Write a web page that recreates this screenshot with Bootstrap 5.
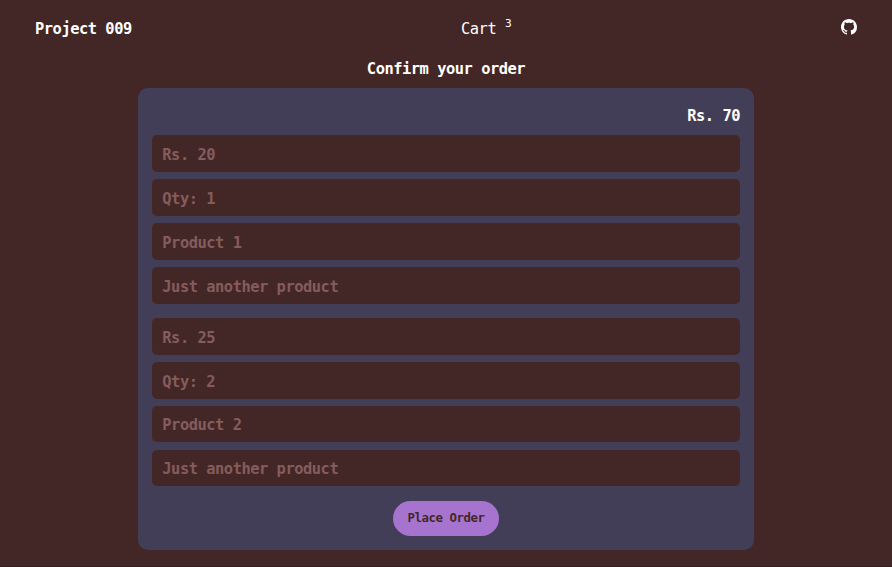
<!DOCTYPE html>
<html lang="en">
<head>
<meta charset="utf-8">
<meta name="viewport" content="width=device-width, initial-scale=1">
<title>Confirm your order</title>
<link rel="stylesheet" href="https://cdn.jsdelivr.net/npm/bootstrap@5.3.0/dist/css/bootstrap.min.css">
<style>
html { font-size: 14px; }
body { background: #432727; color: #fff; font-family: "DejaVu Sans Mono", monospace; font-size: 15.4px; letter-spacing: -.472px; line-height: 18px; height: 567px; overflow: hidden; border-bottom: 1px solid #381d1e; }
.topbar { padding: 19px 35px 0; height: 60px; }
.topbar > div { padding-top: 1px; }
.cart-count { font-size: 11.2px; letter-spacing: 0; top: -7px; line-height: 0; }
.page-title { height: 28px; }
.order-panel { width: 616px; height: 462px; background: #433e58; border-radius: 10px; padding: 19px 14px 14px; }
.order-total { margin-bottom: 10.3px; }
.form-control.order-field { height: 36.7px; background: #432727; border: 0; border-radius: 5px; padding: 2.6px 10.3px 0; font: inherit; font-weight: 700; letter-spacing: inherit; color: #855c5c; }
.order-field::placeholder { color: #855c5c !important; opacity: 1; }
.field-group { gap: 7.2px; margin-bottom: 14.4px; }
.btn.place-order { width: 106px; height: 35px; padding: 0; background: #a674cf; color: #432727; font-size: 12.4px; font-weight: 700; letter-spacing: -.46px; }
</style>
<script src="https://cdn.jsdelivr.net/npm/bootstrap@5.3.0/dist/js/bootstrap.bundle.min.js"></script>
</head>
<body>
<header class="topbar d-flex align-items-start justify-content-between">
  <div class="fw-bold">Project 009</div>
  <div class="text-nowrap">Cart <sup class="cart-count">3</sup></div>
  <svg width="16" height="16" viewBox="0 0 16 16" fill="#fff" aria-label="GitHub"><path d="M8 0C3.58 0 0 3.58 0 8c0 3.54 2.29 6.53 5.47 7.59.4.07.55-.17.55-.38 0-.19-.01-.82-.01-1.49-2.01.37-2.53-.49-2.69-.94-.09-.23-.48-.94-.82-1.13-.28-.15-.68-.52-.01-.53.63-.01 1.08.58 1.23.82.72 1.21 1.87.87 2.33.66.07-.52.28-.87.51-1.07-1.78-.2-3.64-.89-3.64-3.95 0-.87.31-1.59.82-2.15-.08-.2-.36-1.02.08-2.12 0 0 .67-.21 2.2.82.64-.18 1.32-.27 2-.27s1.36.09 2 .27c1.53-1.04 2.2-.82 2.2-.82.44 1.1.16 1.92.08 2.12.51.56.82 1.27.82 2.15 0 3.07-1.87 3.75-3.65 3.95.29.25.54.73.54 1.48 0 1.07-.01 1.93-.01 2.2 0 .21.15.46.55.38A8.01 8.01 0 0 0 16 8c0-4.42-3.58-8-8-8z"/></svg>
</header>
<main class="d-flex flex-column align-items-center">
  <div class="page-title fw-bold">Confirm your order</div>
  <form class="order-panel">
    <div class="order-total fw-bold text-end">Rs. 70</div>
    <div class="field-group d-grid">
      <input class="form-control order-field" placeholder="Rs. 20">
      <input class="form-control order-field" placeholder="Qty: 1">
      <input class="form-control order-field" placeholder="Product 1">
      <input class="form-control order-field" placeholder="Just another product">
    </div>
    <div class="field-group d-grid">
      <input class="form-control order-field" placeholder="Rs. 25">
      <input class="form-control order-field" placeholder="Qty: 2">
      <input class="form-control order-field" placeholder="Product 2">
      <input class="form-control order-field" placeholder="Just another product">
    </div>
    <div class="text-center"><button type="button" class="btn rounded-pill place-order">Place Order</button></div>
  </form>
</main>
</body>
</html>
